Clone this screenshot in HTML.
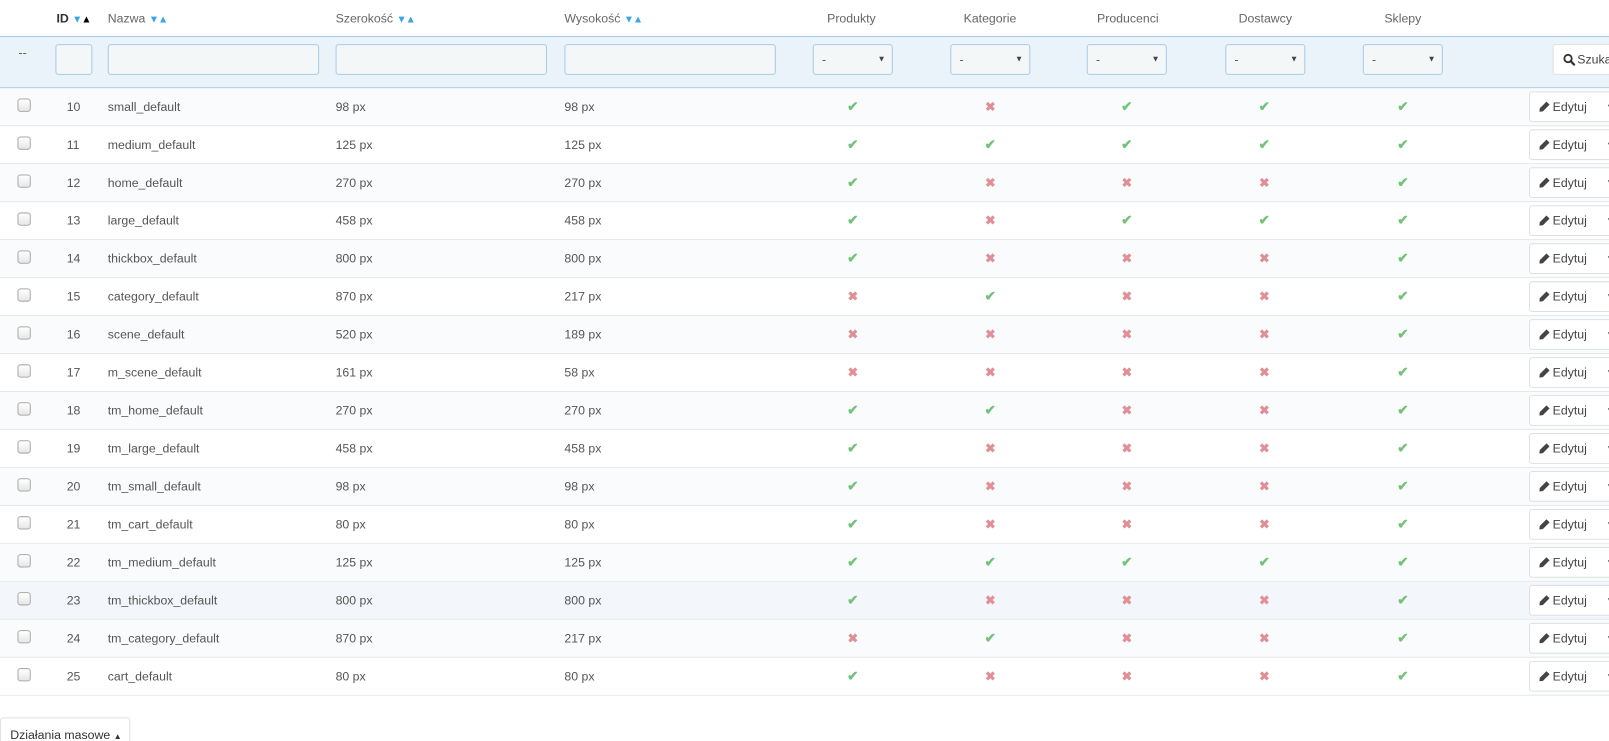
<!DOCTYPE html>
<html><head><meta charset="utf-8"><style>
*{box-sizing:border-box;margin:0;padding:0}
html,body{width:1609px;height:741px;overflow:hidden;background:#fff}
body{font-family:"Liberation Sans",sans-serif;font-size:12px;color:#555;position:relative}
#w{position:absolute;left:0;top:0;width:1568px;height:722px;transform:scale(1.0262);transform-origin:0 0}
.a{position:absolute}
.h{top:10px;line-height:16px;font-size:12px;color:#666}
.ar{font-size:10px;color:#3aa5e6;letter-spacing:-1px}
.filter{top:35px;left:0;width:1620px;height:51px;background:#ebf3fa;border-top:1px solid #a6cbe6;border-bottom:1px solid #a6cbe6}
.in{top:43px;height:30px;background:#f4f7f8;border:1px solid #a6cbe6;border-radius:3px}
.sel{top:43px;height:30px;width:78px;background:#f4f7f8;border:1px solid #a6cbe6;border-radius:3px;font-size:12px;line-height:28px;padding-left:8px}
.sel:after{content:"▼";position:absolute;right:6px;top:0;font-size:8px;color:#444}
.row{position:absolute;left:0;width:1620px;height:37px;border-bottom:1px solid #e5e8ea}
.row.l{background:#fafbfd}
.row.hv{background:#f3f6fa}
.row div{position:absolute;top:0;line-height:36px}
.cb{left:17px;top:10px!important;width:13px;height:13px;border:1px solid #a9a9a9;border-radius:3px;background:linear-gradient(#fff,#e6e6e6)}
.c{width:20px;text-align:center;font-weight:bold;font-size:13px}
.y{color:#72c279}
.n{color:#e08f95;font-size:12px}
.ed{left:1490px;top:3px!important;width:130px;height:30px;border:1px solid #dde1e4;border-radius:3px;background:#fff;line-height:28px!important;padding-left:9px;color:#444;font-size:12px}
.ed:before{content:"";display:inline-block;width:10px;height:10px;margin-right:3px;vertical-align:-1px;background:linear-gradient(135deg,transparent 0 30%,#444 30% 70%,transparent 70%);clip-path:polygon(70% 0,100% 30%,35% 95%,0 100%,5% 65%)}
.ed:after{content:"▼";position:absolute;left:74px;top:0;font-size:9px;color:#444}
</style></head><body><div id="w">
<div class="a h" style="left:55px;color:#333;font-weight:bold">ID <span class="ar">▼</span><span class="ar" style="color:#000">▲</span></div>
<div class="a h" style="left:105px">Nazwa <span class="ar">▼▲</span></div>
<div class="a h" style="left:327px">Szerokość <span class="ar">▼▲</span></div>
<div class="a h" style="left:550px">Wysokość <span class="ar">▼▲</span></div>
<div class="a h" style="left:806px">Produkty</div>
<div class="a h" style="left:939px">Kategorie</div>
<div class="a h" style="left:1069px">Producenci</div>
<div class="a h" style="left:1207px">Dostawcy</div>
<div class="a h" style="left:1349px">Sklepy</div>
<div class="a filter"></div>
<div class="a" style="left:18px;top:44px;color:#555">--</div>
<div class="a in" style="left:54px;width:36px"></div>
<div class="a in" style="left:105px;width:206px"></div>
<div class="a in" style="left:327px;width:206px"></div>
<div class="a in" style="left:550px;width:206px"></div>
<div class="a sel" style="left:792px">-</div>
<div class="a sel" style="left:926px">-</div>
<div class="a sel" style="left:1059px">-</div>
<div class="a sel" style="left:1194px">-</div>
<div class="a sel" style="left:1328px">-</div>
<div class="a" style="left:1513px;top:43px;width:110px;height:30px;border:1px solid #dde1e4;border-radius:3px;background:#fff;line-height:28px;padding-left:9px;color:#444"><svg width="12" height="12" viewBox="0 0 12 12" style="vertical-align:-2px;margin-right:2px"><circle cx="5" cy="5" r="3.6" fill="none" stroke="#333" stroke-width="1.8"/><path d="M7.5 7.5L11 11" stroke="#333" stroke-width="2.2" stroke-linecap="round"/></svg>Szukaj</div>

<div class="row l" style="top:86px"><div class="cb"></div><div style="left:65px">10</div><div style="left:105px">small_default</div><div style="left:327px">98 px</div><div style="left:550px">98 px</div><div class="c y" style="left:821px">✔</div><div class="c n" style="left:955px">✖</div><div class="c y" style="left:1088px">✔</div><div class="c y" style="left:1222px">✔</div><div class="c y" style="left:1357px">✔</div><div class="ed">Edytuj</div></div>
<div class="row" style="top:123px"><div class="cb"></div><div style="left:65px">11</div><div style="left:105px">medium_default</div><div style="left:327px">125 px</div><div style="left:550px">125 px</div><div class="c y" style="left:821px">✔</div><div class="c y" style="left:955px">✔</div><div class="c y" style="left:1088px">✔</div><div class="c y" style="left:1222px">✔</div><div class="c y" style="left:1357px">✔</div><div class="ed">Edytuj</div></div>
<div class="row l" style="top:160px"><div class="cb"></div><div style="left:65px">12</div><div style="left:105px">home_default</div><div style="left:327px">270 px</div><div style="left:550px">270 px</div><div class="c y" style="left:821px">✔</div><div class="c n" style="left:955px">✖</div><div class="c n" style="left:1088px">✖</div><div class="c n" style="left:1222px">✖</div><div class="c y" style="left:1357px">✔</div><div class="ed">Edytuj</div></div>
<div class="row" style="top:197px"><div class="cb"></div><div style="left:65px">13</div><div style="left:105px">large_default</div><div style="left:327px">458 px</div><div style="left:550px">458 px</div><div class="c y" style="left:821px">✔</div><div class="c n" style="left:955px">✖</div><div class="c y" style="left:1088px">✔</div><div class="c y" style="left:1222px">✔</div><div class="c y" style="left:1357px">✔</div><div class="ed">Edytuj</div></div>
<div class="row l" style="top:234px"><div class="cb"></div><div style="left:65px">14</div><div style="left:105px">thickbox_default</div><div style="left:327px">800 px</div><div style="left:550px">800 px</div><div class="c y" style="left:821px">✔</div><div class="c n" style="left:955px">✖</div><div class="c n" style="left:1088px">✖</div><div class="c n" style="left:1222px">✖</div><div class="c y" style="left:1357px">✔</div><div class="ed">Edytuj</div></div>
<div class="row" style="top:271px"><div class="cb"></div><div style="left:65px">15</div><div style="left:105px">category_default</div><div style="left:327px">870 px</div><div style="left:550px">217 px</div><div class="c n" style="left:821px">✖</div><div class="c y" style="left:955px">✔</div><div class="c n" style="left:1088px">✖</div><div class="c n" style="left:1222px">✖</div><div class="c y" style="left:1357px">✔</div><div class="ed">Edytuj</div></div>
<div class="row l" style="top:308px"><div class="cb"></div><div style="left:65px">16</div><div style="left:105px">scene_default</div><div style="left:327px">520 px</div><div style="left:550px">189 px</div><div class="c n" style="left:821px">✖</div><div class="c n" style="left:955px">✖</div><div class="c n" style="left:1088px">✖</div><div class="c n" style="left:1222px">✖</div><div class="c y" style="left:1357px">✔</div><div class="ed">Edytuj</div></div>
<div class="row" style="top:345px"><div class="cb"></div><div style="left:65px">17</div><div style="left:105px">m_scene_default</div><div style="left:327px">161 px</div><div style="left:550px">58 px</div><div class="c n" style="left:821px">✖</div><div class="c n" style="left:955px">✖</div><div class="c n" style="left:1088px">✖</div><div class="c n" style="left:1222px">✖</div><div class="c y" style="left:1357px">✔</div><div class="ed">Edytuj</div></div>
<div class="row l" style="top:382px"><div class="cb"></div><div style="left:65px">18</div><div style="left:105px">tm_home_default</div><div style="left:327px">270 px</div><div style="left:550px">270 px</div><div class="c y" style="left:821px">✔</div><div class="c y" style="left:955px">✔</div><div class="c n" style="left:1088px">✖</div><div class="c n" style="left:1222px">✖</div><div class="c y" style="left:1357px">✔</div><div class="ed">Edytuj</div></div>
<div class="row" style="top:419px"><div class="cb"></div><div style="left:65px">19</div><div style="left:105px">tm_large_default</div><div style="left:327px">458 px</div><div style="left:550px">458 px</div><div class="c y" style="left:821px">✔</div><div class="c n" style="left:955px">✖</div><div class="c n" style="left:1088px">✖</div><div class="c n" style="left:1222px">✖</div><div class="c y" style="left:1357px">✔</div><div class="ed">Edytuj</div></div>
<div class="row l" style="top:456px"><div class="cb"></div><div style="left:65px">20</div><div style="left:105px">tm_small_default</div><div style="left:327px">98 px</div><div style="left:550px">98 px</div><div class="c y" style="left:821px">✔</div><div class="c n" style="left:955px">✖</div><div class="c n" style="left:1088px">✖</div><div class="c n" style="left:1222px">✖</div><div class="c y" style="left:1357px">✔</div><div class="ed">Edytuj</div></div>
<div class="row" style="top:493px"><div class="cb"></div><div style="left:65px">21</div><div style="left:105px">tm_cart_default</div><div style="left:327px">80 px</div><div style="left:550px">80 px</div><div class="c y" style="left:821px">✔</div><div class="c n" style="left:955px">✖</div><div class="c n" style="left:1088px">✖</div><div class="c n" style="left:1222px">✖</div><div class="c y" style="left:1357px">✔</div><div class="ed">Edytuj</div></div>
<div class="row l" style="top:530px"><div class="cb"></div><div style="left:65px">22</div><div style="left:105px">tm_medium_default</div><div style="left:327px">125 px</div><div style="left:550px">125 px</div><div class="c y" style="left:821px">✔</div><div class="c y" style="left:955px">✔</div><div class="c y" style="left:1088px">✔</div><div class="c y" style="left:1222px">✔</div><div class="c y" style="left:1357px">✔</div><div class="ed">Edytuj</div></div>
<div class="row hv" style="top:567px"><div class="cb"></div><div style="left:65px">23</div><div style="left:105px">tm_thickbox_default</div><div style="left:327px">800 px</div><div style="left:550px">800 px</div><div class="c y" style="left:821px">✔</div><div class="c n" style="left:955px">✖</div><div class="c n" style="left:1088px">✖</div><div class="c n" style="left:1222px">✖</div><div class="c y" style="left:1357px">✔</div><div class="ed">Edytuj</div></div>
<div class="row l" style="top:604px"><div class="cb"></div><div style="left:65px">24</div><div style="left:105px">tm_category_default</div><div style="left:327px">870 px</div><div style="left:550px">217 px</div><div class="c n" style="left:821px">✖</div><div class="c y" style="left:955px">✔</div><div class="c n" style="left:1088px">✖</div><div class="c n" style="left:1222px">✖</div><div class="c y" style="left:1357px">✔</div><div class="ed">Edytuj</div></div>
<div class="row" style="top:641px"><div class="cb"></div><div style="left:65px">25</div><div style="left:105px">cart_default</div><div style="left:327px">80 px</div><div style="left:550px">80 px</div><div class="c y" style="left:821px">✔</div><div class="c n" style="left:955px">✖</div><div class="c n" style="left:1088px">✖</div><div class="c n" style="left:1222px">✖</div><div class="c y" style="left:1357px">✔</div><div class="ed">Edytuj</div></div>

<div class="a" style="left:0;top:699px;width:127px;height:50px;border:1px solid #dde1e4;border-radius:3px;background:#fff;padding:9px 0 0 9px;color:#333">Działania masowe <span style="font-size:8px">▲</span></div>
</div></body></html>
